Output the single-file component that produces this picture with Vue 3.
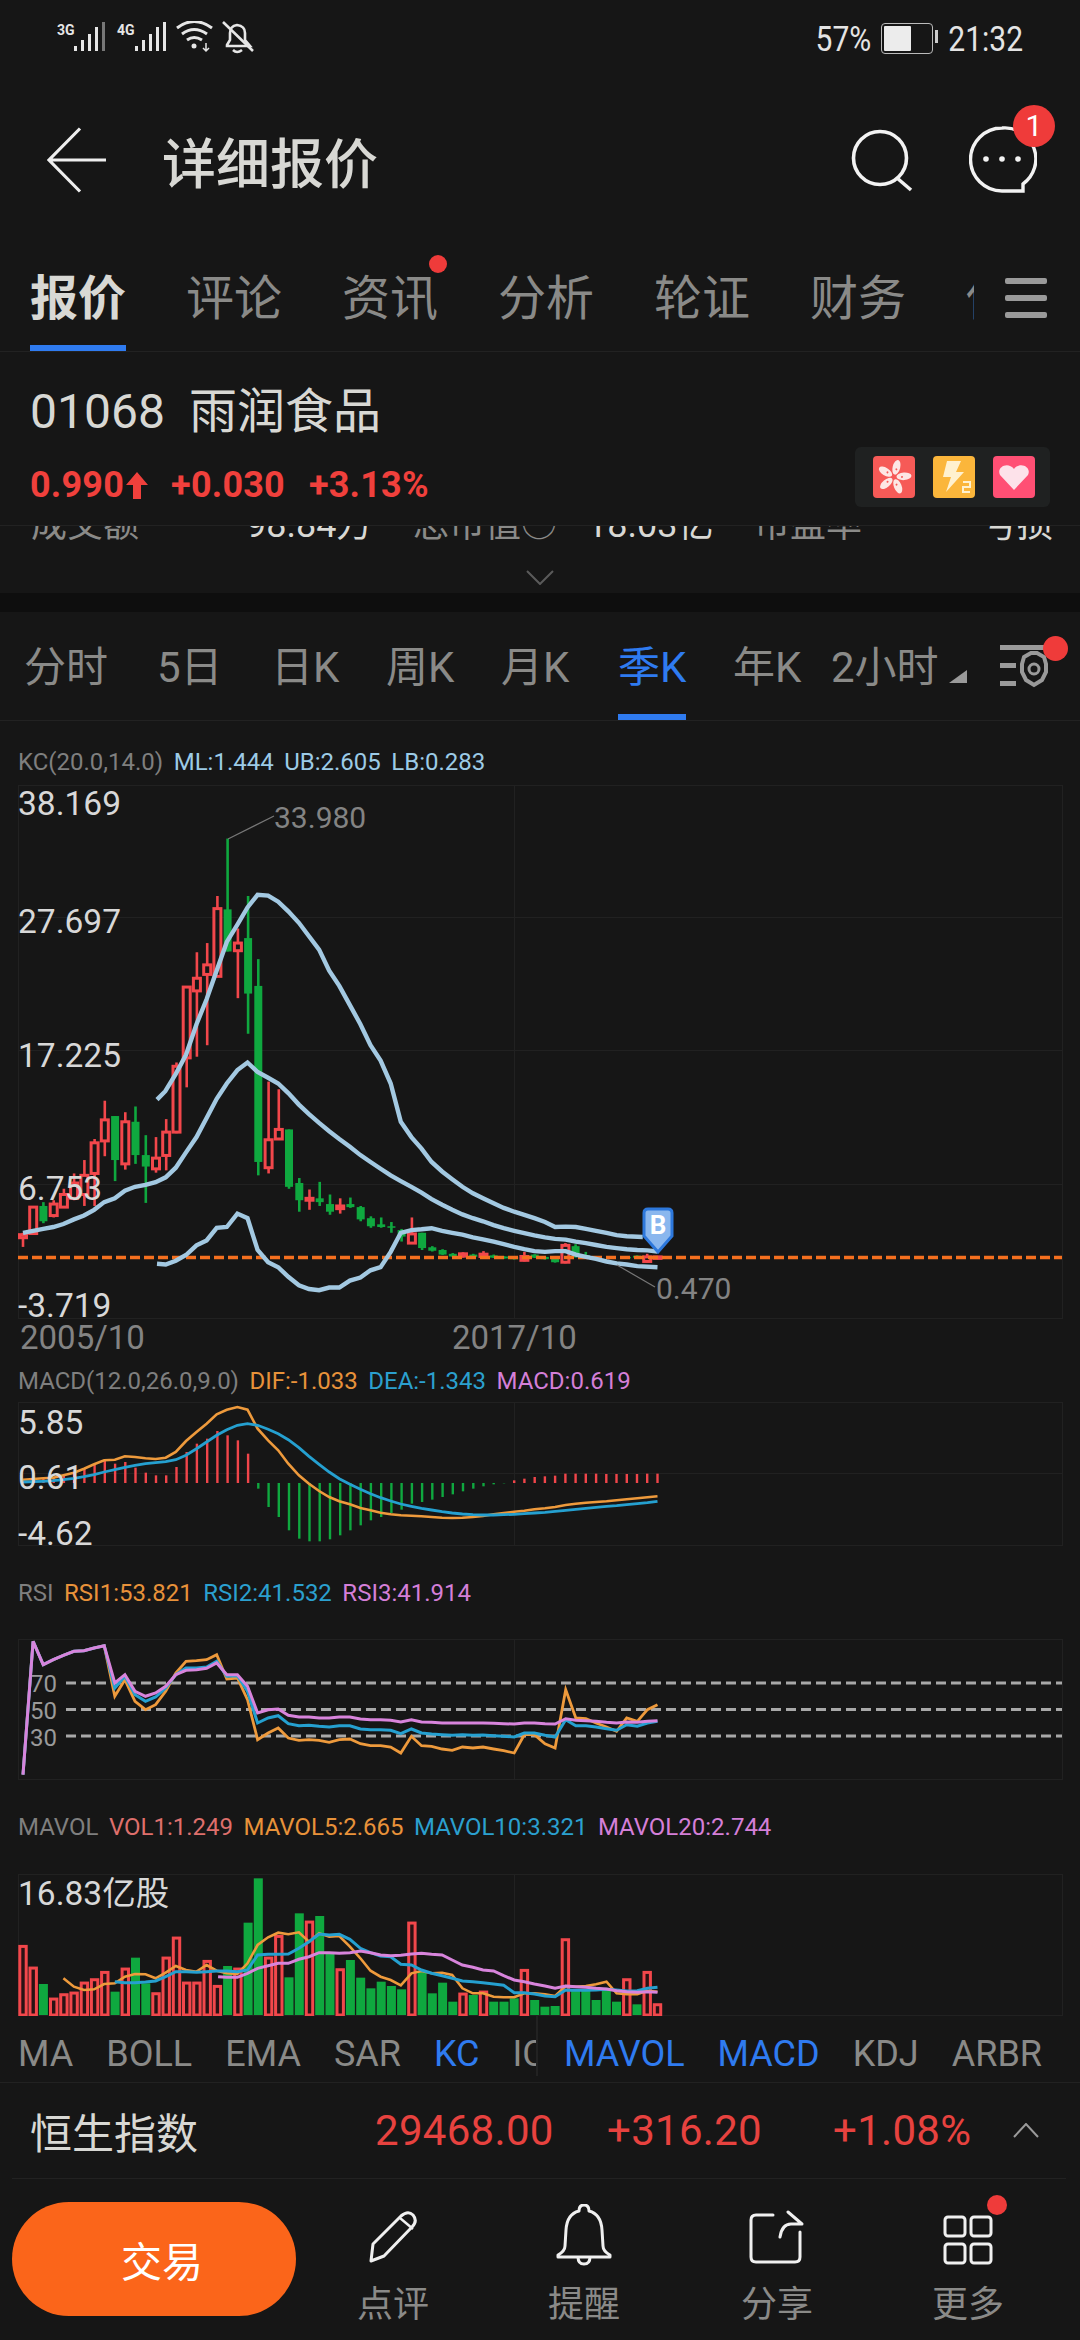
<script setup>
// reference was read in zoom coords, x scale is 2.178 everywhere in the chart
const zx = (v) => +(v / 2.178).toFixed(1)
const stepX = (i) => 50 + 22.29 * i

const pts = (list, fy) => list.map(([x, y]) => `${zx(x)},${fy(y).toFixed(1)}`).join(' ')

// KC panel: zoom y -> svg y
const ky = (y) => (y - 65) / 2.613
const my = (y) => (y - 185) / 3
const ry = (y) => (y - 898) / 3
const vy = (y) => (y - 222) / 3

const tabs = ['报价', '评论', '资讯', '分析', '轮证', '财务', '估值']
const periods = [
  { t: '分时', w: 133 }, { t: '5日', w: 114 }, { t: '日K', w: 115 }, { t: '周K', w: 115 },
  { t: '月K', w: 117 }, { t: '季K', w: 115, on: true }, { t: '年K', w: 98 }, { t: '2小时', w: 112 },
]

// [color, wickTop, bodyTop, bodyBottom, wickBottom]
const candleData = [
  ['r', 1235, 1240, 1248, 1272], ['r', 1165, 1168, 1237, 1240], ['g', 1155, 1165, 1205, 1210], ['r', 1150, 1160, 1190, 1195],
  ['r', 1120, 1135, 1168, 1170], ['r', 1080, 1105, 1145, 1150], ['r', 1045, 1085, 1135, 1165], ['r', 990, 1000, 1080, 1165],
  ['r', 890, 940, 995, 1035], ['g', 930, 930, 1045, 1100], ['r', 920, 945, 1055, 1070], ['g', 905, 945, 1032, 1055],
  ['g', 980, 1032, 1062, 1157], ['r', 985, 1040, 1068, 1078], ['r', 938, 972, 1033, 1072], ['r', 790, 800, 972, 975],
  ['r', 593, 593, 778, 855], ['r', 502, 570, 603, 775], ['r', 478, 535, 560, 745], ['r', 355, 388, 565, 565],
  ['g', 205, 390, 500, 500], ['r', 440, 478, 498, 622], ['g', 355, 465, 610, 715], ['g', 520, 590, 1050, 1085],
  ['r', 840, 992, 1065, 1080], ['r', 860, 965, 990, 990], ['g', 965, 965, 1115, 1120], ['g', 1092, 1105, 1150, 1180],
  ['r', 1122, 1145, 1150, 1175], ['g', 1102, 1145, 1155, 1165], ['g', 1135, 1160, 1180, 1188], ['r', 1145, 1165, 1172, 1185],
  ['g', 1143, 1160, 1168, 1170], ['g', 1165, 1168, 1200, 1205], ['g', 1192, 1197, 1218, 1222], ['g', 1195, 1213, 1220, 1222],
  ['g', 1207, 1218, 1222, 1235], ['g', 1225, 1228, 1245, 1258], ['r', 1195, 1238, 1262, 1262], ['g', 1235, 1235, 1275, 1280],
  ['g', 1270, 1273, 1282, 1284], ['g', 1278, 1280, 1292, 1293], ['g', 1288, 1290, 1297, 1298], ['r', 1286, 1290, 1296, 1300],
  ['g', 1290, 1292, 1298, 1300], ['r', 1283, 1291, 1297, 1302], ['g', 1292, 1294, 1300, 1301], ['g', 1296, 1297, 1302, 1303],
  ['g', 1297, 1298, 1304, 1305], ['r', 1285, 1297, 1307, 1310], ['g', 1291, 1292, 1300, 1301], ['g', 1297, 1298, 1304, 1305],
  ['g', 1301, 1302, 1312, 1313], ['r', 1262, 1268, 1312, 1315], ['g', 1265, 1270, 1298, 1300], ['g', 1285, 1293, 1300, 1301],
  ['g', 1301, 1302, 1306, 1307], ['g', 1307, 1308, 1312, 1313], ['g', 1311, 1312, 1315, 1316], ['g', 1297, 1298, 1302, 1303],
  ['g', 1294, 1295, 1300, 1301], ['r', 1290, 1298, 1310, 1312], ['r', 1296, 1298, 1302, 1304],
]
const candles = candleData.map(([c, wt, bt, bb, wb], i) => ({
  c,
  x: zx(stepX(i)),
  wt: ky(wt), wb: ky(wb), bt: ky(bt), bh: Math.max(ky(bb) - ky(bt), 1.5),
}))

const ub = [[342,887],[360,865],[383,820],[405,770],[428,690],[450,625],[472,550],[494,475],[517,430],[539,385],[561,352],[584,354],[606,370],[628,395],[651,425],[673,460],[695,495],[717,550],[739,590],[762,640],[785,690],[807,745],[829,785],[851,845],[873,945],[896,985],[918,1015],[940,1050],[963,1075],[985,1095],[1007,1115],[1030,1132],[1052,1145],[1075,1158],[1097,1170],[1120,1180],[1142,1188],[1164,1197],[1187,1207],[1209,1220],[1232,1219],[1254,1220],[1276,1225],[1298,1230],[1321,1235],[1343,1241],[1365,1244],[1400,1246]]
const ml = [[50,1235],[72,1230],[94,1225],[116,1220],[138,1212],[161,1200],[183,1190],[205,1175],[227,1155],[250,1145],[272,1125],[294,1115],[317,1110],[339,1103],[361,1090],[383,1065],[405,1025],[428,985],[450,935],[472,885],[494,845],[517,810],[539,790],[561,815],[584,830],[606,845],[628,870],[651,900],[673,925],[695,948],[717,970],[739,990],[762,1010],[785,1032],[807,1050],[829,1068],[851,1085],[873,1100],[896,1115],[918,1130],[940,1147],[963,1162],[985,1175],[1007,1187],[1030,1197],[1052,1205],[1075,1215],[1097,1223],[1120,1230],[1142,1236],[1164,1242],[1187,1247],[1209,1251],[1232,1253],[1254,1258],[1276,1262],[1298,1267],[1321,1272],[1343,1275],[1365,1278],[1388,1280],[1410,1281],[1432,1284]]
const lb = [[342,1316],[361,1318],[383,1308],[405,1293],[428,1268],[450,1255],[472,1222],[494,1220],[517,1185],[539,1197],[561,1280],[584,1312],[606,1325],[628,1350],[651,1372],[673,1382],[695,1385],[717,1378],[739,1378],[762,1360],[785,1352],[807,1333],[829,1325],[851,1285],[873,1235],[896,1228],[918,1226],[940,1223],[963,1230],[985,1235],[1007,1240],[1030,1247],[1052,1252],[1075,1258],[1097,1265],[1120,1272],[1142,1278],[1164,1283],[1187,1285],[1209,1283],[1232,1283],[1254,1292],[1276,1298],[1298,1303],[1321,1310],[1343,1315],[1365,1318],[1388,1322],[1432,1325]]
const kcLines = [ub, ml, lb].map((l) => pts(l, ky))

// MACD histogram: end of each bar in zoom y, zero line is 428
const macdEnds = [425,420,415,410,405,395,385,372,360,370,365,382,397,405,405,380,335,310,295,272,285,300,340,445,500,530,570,595,603,603,597,585,570,555,540,530,518,508,490,485,478,470,462,453,445,438,432,429,420,415,410,408,406,400,400,400,400,401,401,401,401,400,400]
const macdBars = macdEnds.map((e, i) => ({
  x: zx(stepX(i)),
  y1: my(428),
  y2: my(e),
  c: e < 428 ? '#f0454a' : '#0fa83f',
}))
const dif = [[50,418],[72,416],[94,414],[116,412],[138,405],[161,397],[183,385],[205,372],[227,360],[250,358],[272,348],[294,350],[317,354],[339,356],[361,352],[383,335],[405,302],[428,275],[450,250],[472,222],[494,208],[517,200],[539,208],[561,265],[584,300],[606,330],[628,370],[651,405],[673,430],[695,452],[717,470],[739,483],[762,492],[785,503],[807,510],[829,517],[851,522],[873,525],[896,526],[918,528],[940,530],[963,532],[985,533],[1007,532],[1030,530],[1052,527],[1075,522],[1097,518],[1120,514],[1142,511],[1164,507],[1187,504],[1209,500],[1232,494],[1254,490],[1276,487],[1298,485],[1321,483],[1343,480],[1365,477],[1388,474],[1410,471],[1432,468]]
const dea = [[50,425],[72,424],[94,423],[116,421],[138,418],[161,414],[183,409],[205,403],[227,395],[250,388],[272,381],[294,375],[317,370],[339,367],[361,364],[383,358],[405,345],[428,325],[450,305],[472,285],[494,268],[517,255],[539,250],[561,255],[584,267],[606,280],[628,298],[651,322],[673,348],[695,372],[717,395],[739,415],[762,432],[785,447],[807,460],[829,472],[851,482],[873,491],[896,498],[918,504],[940,509],[963,514],[985,518],[1007,521],[1030,523],[1052,524],[1075,524],[1097,523],[1120,522],[1142,520],[1164,518],[1187,516],[1209,513],[1232,510],[1254,507],[1276,504],[1298,501],[1321,498],[1343,496],[1365,493],[1388,490],[1410,487],[1432,483]]

const rsiHead = [[50,1305],[72,905],[94,975],[116,960],[138,947],[161,935],[183,933],[205,925],[227,918]]
const rsi1 = rsiHead.concat([[250,1070],[272,1020],[294,1085],[317,1110],[339,1095],[361,1055],[383,1000],[405,965],[428,963],[450,960],[472,945],[494,1018],[517,1015],[539,1080],[561,1200],[584,1180],[606,1165],[628,1195],[651,1202],[673,1200],[695,1202],[717,1208],[739,1200],[762,1198],[785,1212],[807,1218],[829,1218],[851,1222],[873,1240],[896,1190],[918,1218],[940,1220],[963,1228],[985,1232],[1007,1222],[1030,1225],[1052,1222],[1075,1228],[1097,1233],[1120,1240],[1142,1185],[1164,1185],[1187,1212],[1209,1225],[1232,1050],[1254,1135],[1276,1137],[1298,1150],[1321,1162],[1343,1175],[1365,1135],[1388,1145],[1410,1110],[1432,1095]])
const rsi2 = rsiHead.concat([[250,1045],[272,1010],[294,1065],[317,1085],[339,1072],[361,1045],[383,1005],[405,985],[428,985],[450,982],[472,965],[494,1010],[517,1008],[539,1055],[561,1150],[584,1135],[606,1128],[628,1152],[651,1158],[673,1157],[695,1160],[717,1162],[739,1158],[762,1158],[785,1168],[807,1170],[829,1170],[851,1172],[873,1182],[896,1168],[918,1180],[940,1183],[963,1185],[985,1187],[1007,1185],[1030,1187],[1052,1186],[1075,1188],[1097,1190],[1120,1192],[1142,1180],[1164,1180],[1187,1187],[1209,1192],[1232,1140],[1254,1158],[1276,1158],[1298,1162],[1321,1167],[1343,1172],[1365,1155],[1388,1160],[1410,1150],[1432,1145]])
const rsi3 = rsiHead.concat([[250,1030],[272,1005],[294,1055],[317,1070],[339,1060],[361,1040],[383,1005],[405,992],[428,990],[450,986],[472,970],[494,1005],[517,1005],[539,1040],[561,1120],[584,1110],[606,1108],[628,1127],[651,1132],[673,1132],[695,1135],[717,1135],[739,1132],[762,1132],[785,1138],[807,1140],[829,1140],[851,1142],[873,1147],[896,1140],[918,1147],[940,1148],[963,1150],[985,1150],[1007,1150],[1030,1150],[1052,1150],[1075,1151],[1097,1152],[1120,1153],[1142,1150],[1164,1150],[1187,1152],[1209,1153],[1232,1137],[1254,1142],[1276,1143],[1298,1145],[1321,1148],[1343,1150],[1365,1147],[1388,1148],[1410,1145],[1432,1143]])

const volData = [
  ['r',435],['r',500],['g',552],['r',593],['r',580],['r',575],['r',545],['r',535],['r',513],['g',575],['r',503],['g',473],['g',550],['r',577],['r',470],['r',410],
  ['r',545],['r',545],['r',480],['r',555],['g',498],['r',503],['g',368],['g',235],['r',470],['r',405],['g',532],['g',340],['r',362],['g',348],['g',460],['r',505],
  ['g',480],['g',533],['g',565],['g',545],['g',558],['g',568],['r',365],['g',515],['g',580],['g',548],['g',605],['r',578],['g',585],['r',572],['g',605],['g',605],
  ['g',595],['r',507],['g',600],['g',620],['g',618],['r',415],['g',570],['g',570],['g',600],['g',565],['g',605],['r',535],['g',613],['r',513],['r',610],
]
const volBars = volData.map(([c, top], i) => ({
  c,
  x: zx(stepX(i)),
  y: vy(top),
  h: vy(645) - vy(top),
}))
const mavol5 = [[138,535],[161,560],[183,570],[205,568],[227,552],[250,550],[272,530],[294,522],[317,523],[339,535],[361,518],[383,498],[405,510],[428,515],[450,495],[472,512],[494,520],[517,522],[539,490],[561,435],[584,412],[606,398],[628,403],[651,397],[673,425],[695,400],[717,410],[739,408],[762,440],[785,475],[807,512],[829,530],[851,540],[873,556],[896,520],[918,513],[940,520],[963,518],[985,525],[1007,565],[1030,580],[1052,580],[1075,590],[1097,592],[1120,592],[1142,580],[1164,580],[1187,583],[1209,588],[1232,558],[1254,560],[1276,558],[1298,553],[1321,545],[1343,580],[1365,583],[1388,583],[1410,572],[1432,575]]
const mavol10 = [[250,545],[272,548],[294,548],[317,546],[339,543],[361,530],[383,515],[405,515],[428,517],[450,515],[472,513],[494,513],[517,515],[539,510],[561,465],[584,463],[606,463],[628,462],[651,445],[673,425],[695,402],[717,405],[739,403],[762,418],[785,445],[807,458],[829,468],[851,470],[873,493],[896,495],[918,510],[940,520],[963,527],[985,535],[1007,543],[1030,545],[1052,548],[1075,552],[1097,556],[1120,578],[1142,578],[1164,582],[1187,588],[1209,590],[1232,570],[1254,571],[1276,571],[1298,570],[1321,568],[1343,570],[1365,573],[1388,572],[1410,565],[1432,562]]
const mavol20 = [[475,530],[494,532],[517,532],[539,520],[561,505],[584,497],[606,490],[628,490],[651,478],[673,470],[695,458],[717,458],[739,460],[762,458],[785,453],[807,458],[829,465],[851,467],[873,466],[896,462],[918,460],[940,463],[963,465],[985,480],[1007,495],[1030,502],[1052,510],[1075,513],[1097,527],[1120,540],[1142,545],[1164,552],[1187,558],[1209,565],[1232,558],[1254,560],[1276,562],[1298,565],[1321,567],[1343,572],[1365,575],[1388,577],[1410,575],[1432,577]]
</script>

<template>
  <div class="page">
    <div class="status">
      <svg class="status-left" width="210" height="34" viewBox="0 0 210 34">
        <text x="0" y="14" class="net">3G</text>
        <g fill="#e6e6e6">
          <rect x="17" y="25" width="3" height="5" />
          <rect x="24" y="19" width="3" height="11" />
          <rect x="31" y="13" width="3" height="17" />
          <rect x="38" y="6" width="3" height="24" />
          <rect x="45" y="1" width="3" height="29" fill="#777" />
        </g>
        <text x="60" y="14" class="net">4G</text>
        <g fill="#e6e6e6">
          <rect x="78" y="25" width="3" height="5" />
          <rect x="85" y="19" width="3" height="11" />
          <rect x="92" y="13" width="3" height="17" />
          <rect x="99" y="6" width="3" height="24" />
          <rect x="106" y="1" width="3" height="29" />
        </g>
        <g fill="none" stroke="#e6e6e6" stroke-width="3">
          <path d="M120 7 Q137 -6 155 7" />
          <path d="M125 13 Q137 4 150 13" />
          <path d="M130 19 Q137 14 145 19" />
        </g>
        <circle cx="137" cy="25" r="2.5" fill="#e6e6e6" />
        <path d="M149 22v8M146 27l3 3 3-3" stroke="#e6e6e6" stroke-width="1.5" fill="none" />
        <g fill="none" stroke="#e6e6e6" stroke-width="2.6">
          <path d="M170 24 L173 19 V12 Q173 5 180 4 Q188 5 188 12 V19 L193 25 H170 Z" />
          <path d="M166 1 L196 30" />
          <path d="M176 29 Q180 33 185 29" />
        </g>
      </svg>
      <div class="status-right">
        <span class="st-text">57%</span>
        <span class="battery"><i class="battery-fill"></i></span>
        <span class="st-text">21:32</span>
      </div>
    </div>

    <div class="header">
      <svg class="back" width="60" height="66" viewBox="0 0 60 66">
        <path d="M33 1.5 L2 33 L33 64.5 M2 33 H59" fill="none" stroke="#eee" stroke-width="3.2" />
      </svg>
      <span class="title">详细报价</span>
      <svg class="search" width="62" height="64" viewBox="0 0 62 64">
        <circle cx="29" cy="30" r="26.5" fill="none" stroke="#f2f2f2" stroke-width="3.6" />
        <path d="M46 50 L60 62" stroke="#f2f2f2" stroke-width="3.6" />
      </svg>
      <div class="chat">
        <svg width="68" height="68" viewBox="0 0 68 68">
          <path d="M33 2 A31 31 0 1 0 33 65 H54 V58 A31 31 0 0 0 33 2 Z" fill="none" stroke="#f2f2f2" stroke-width="3.4" />
          <circle cx="17" cy="33" r="2.8" fill="#f2f2f2" />
          <circle cx="33" cy="33" r="2.8" fill="#f2f2f2" />
          <circle cx="49" cy="33" r="2.8" fill="#f2f2f2" />
        </svg>
        <span class="chat-badge">1</span>
      </div>
    </div>

    <div class="tabs">
      <div class="tab-scroll">
        <span v-for="(t, i) in tabs" :key="t" class="tab" :class="{ on: i === 0 }">
          {{ t }}
          <i v-if="t === '资讯'" class="tab-dot"></i>
        </span>
      </div>
      <div class="burger"><i></i><i></i><i></i></div>
    </div>

    <div class="quote">
      <div class="quote-main">
        <div class="stock-name"><span>01068</span><span class="stock-cn">雨润食品</span></div>
        <div class="stock-price">
          <span class="p1">0.990</span>
          <svg class="up" width="24" height="27" viewBox="0 0 24 27"><path d="M12 0 L23 13 H16 V27 H8 V13 H1 Z" fill="#f0403c" /></svg>
          <span class="p2">+0.030</span>
          <span class="p3">+3.13%</span>
        </div>
      </div>
      <div class="flags">
        <svg class="flag" width="42" height="42" viewBox="0 0 42 42">
          <rect width="42" height="42" rx="4" fill="#f65a57" />
          <g v-for="a in [0, 72, 144, 216, 288]" :key="a" :transform="`rotate(${a + 14} 21 21)`">
            <ellipse cx="21" cy="11" rx="3.8" ry="7.5" fill="#fde7e4" />
            <circle cx="21.5" cy="13" r="1" fill="#f65a57" />
          </g>
        </svg>
        <svg class="flag" width="42" height="42" viewBox="0 0 42 42">
          <rect width="42" height="42" rx="4" fill="#fbb63b" />
          <path d="M14 5 H28 L23 16 H31 L13 36 L18 21 H10 Z" fill="#fff1cf" />
          <path d="M30 26 H37 V31 H30 V36 H37" fill="none" stroke="#fff1cf" stroke-width="2" />
        </svg>
        <svg class="flag" width="42" height="42" viewBox="0 0 42 42">
          <rect width="42" height="42" rx="4" fill="#ff4f74" />
          <path d="M21 34 L7 19 C3 11 15 5 21 13 C27 5 39 11 35 19 Z" fill="#fde2ea" />
        </svg>
      </div>
    </div>

    <div class="peek">
      <div class="peek-row">
        <span class="peek-label w1">成交额</span>
        <span class="peek-val w2">98.84万</span>
        <span class="peek-label w3">总市值○</span>
        <span class="peek-val w4">18.03亿</span>
        <span class="peek-label w5">市盈率···</span>
        <span class="peek-val">亏损</span>
      </div>
      <svg class="peek-arrow" width="28" height="15" viewBox="0 0 28 15">
        <path d="M1 1 L14 14 L27 1" fill="none" stroke="#5a5a5a" stroke-width="2" />
      </svg>
    </div>
    <div class="band"></div>

    <div class="periods">
      <span v-for="p in periods" :key="p.t" class="period" :class="{ on: p.on }" :style="{ width: p.w + 'px' }">
        <span class="period-text">{{ p.t }}</span>
      </span>
      <i class="tri"></i>
      <div class="setting">
        <svg width="52" height="48" viewBox="0 0 52 48">
          <g fill="#9a9a9a">
            <rect x="0" y="3" width="44" height="5" />
            <rect x="0" y="21" width="16" height="5" />
            <rect x="0" y="39" width="16" height="5" />
          </g>
          <path d="M24 15 L31 11 H37 L44 15 L46 22 V30 L42 38 L34 43 L26 38 L22 30 V22 Z" fill="none" stroke="#9a9a9a" stroke-width="4" />
          <circle cx="34" cy="27" r="5" fill="none" stroke="#9a9a9a" stroke-width="3" />
        </svg>
        <i class="setting-dot"></i>
      </div>
    </div>

    <div class="ind-row kc-row">
      <span class="gray">KC(20.0,14.0)</span>
      <span class="kc">ML:1.444</span>
      <span class="kc">UB:2.605</span>
      <span class="kc">LB:0.283</span>
    </div>

    <svg class="chart" width="1080" height="534" viewBox="0 0 1080 534">
      <g stroke="#212121" fill="none">
        <rect x="18.5" y="0.5" width="1044" height="533" />
        <path d="M18 132.5H1062M18 265.5H1062M18 399.5H1062M514.5 0V534" />
      </g>
      <g v-for="(k, i) in candles" :key="i">
        <line :x1="k.x" :x2="k.x" :y1="k.wt" :y2="k.wb" :stroke="k.c === 'r' ? '#f2474b' : '#0fa83f'" stroke-width="2.6" />
        <rect v-if="k.c === 'r'" :x="k.x - 3.5" :y="k.bt" width="7" :height="k.bh" fill="#161616" stroke="#f2474b" stroke-width="3" />
        <rect v-else :x="k.x - 4" :y="k.bt" width="8" :height="k.bh" fill="#0fa83f" />
      </g>
      <line x1="18" x2="1062" y1="472.5" y2="472.5" stroke="#f5701f" stroke-width="3.4" stroke-dasharray="10 4" />
      <polyline v-for="(l, i) in kcLines" :key="i" :points="l" fill="none" stroke="#a3c9e2" stroke-width="4.4" />
      <path d="M228 54 L274 31" stroke="#777" stroke-width="1.2" />
      <path d="M617 480 L655 502" stroke="#777" stroke-width="1.2" />
      <path d="M648 424 H668 Q672 424 672 428 V451 L658 467 L644 451 V428 Q644 424 648 424 Z" fill="#8ab7ee" stroke="#2d78dc" stroke-width="3" />
      <text x="658" y="449" class="b-mark">B</text>
      <text x="18" y="30" class="axis">38.169</text>
      <text x="18" y="148" class="axis">27.697</text>
      <text x="18" y="282" class="axis">17.225</text>
      <text x="18" y="415" class="axis">6.753</text>
      <text x="18" y="532" class="axis">-3.719</text>
      <text x="274" y="43" class="axis dim">33.980</text>
      <text x="656" y="514" class="axis dim">0.470</text>
    </svg>

    <div class="dates"><span>2005/10</span><span>2017/10</span></div>

    <div class="ind-row macd-row">
      <span class="gray">MACD(12.0,26.0,9.0)</span>
      <span class="orange">DIF:-1.033</span>
      <span class="blue">DEA:-1.343</span>
      <span class="pink">MACD:0.619</span>
    </div>

    <svg class="chart" width="1080" height="144" viewBox="0 0 1080 144">
      <g stroke="#212121" fill="none">
        <rect x="18.5" y="0.5" width="1044" height="143" />
        <path d="M18 71.5H1062M514.5 0V144" />
      </g>
      <line v-for="(b, i) in macdBars" :key="i" :x1="b.x" :x2="b.x" :y1="b.y1" :y2="b.y2" :stroke="b.c" stroke-width="2.4" />
      <polyline :points="pts(dif, my)" fill="none" stroke="#ee9a3c" stroke-width="2.6" />
      <polyline :points="pts(dea, my)" fill="none" stroke="#25a0d0" stroke-width="2.8" />
      <text x="18" y="32" class="axis">5.85</text>
      <text x="18" y="87" class="axis">0.61</text>
      <text x="18" y="143" class="axis">-4.62</text>
    </svg>

    <div class="ind-row rsi-row">
      <span class="gray">RSI</span>
      <span class="orange">RSI1:53.821</span>
      <span class="blue">RSI2:41.532</span>
      <span class="pink">RSI3:41.914</span>
    </div>

    <svg class="chart" width="1080" height="141" viewBox="0 0 1080 141">
      <g stroke="#212121" fill="none">
        <rect x="18.5" y="0.5" width="1044" height="140" />
        <path d="M514.5 0V141" />
      </g>
      <g stroke="#a8a8a8" stroke-width="3" stroke-dasharray="10 5">
        <line x1="66" x2="1062" y1="44" y2="44" />
        <line x1="66" x2="1062" y1="70.5" y2="70.5" />
        <line x1="66" x2="1062" y1="97" y2="97" />
      </g>
      <text x="30" y="53" class="rsi-axis">70</text>
      <text x="30" y="80" class="rsi-axis">50</text>
      <text x="30" y="107" class="rsi-axis">30</text>
      <polyline :points="pts(rsi1, ry)" fill="none" stroke="#ee9a3c" stroke-width="2.8" />
      <polyline :points="pts(rsi2, ry)" fill="none" stroke="#25a0d0" stroke-width="3" />
      <polyline :points="pts(rsi3, ry)" fill="none" stroke="#d884dc" stroke-width="3" />
    </svg>

    <div class="ind-row vol-row">
      <span class="gray">MAVOL</span>
      <span class="salmon">VOL1:1.249</span>
      <span class="orange">MAVOL5:2.665</span>
      <span class="blue">MAVOL10:3.321</span>
      <span class="pink">MAVOL20:2.744</span>
    </div>

    <svg class="chart" width="1080" height="142" viewBox="0 0 1080 142">
      <g stroke="#212121" fill="none">
        <rect x="18.5" y="0.5" width="1044" height="141" />
        <path d="M514.5 0V141" />
      </g>
      <g v-for="(b, i) in volBars" :key="i">
        <rect v-if="b.c === 'r'" :x="b.x - 3.2" :y="b.y + 1.4" width="6.4" :height="b.h - 1.4" fill="#2a1214" stroke="#f2474b" stroke-width="3" />
        <rect v-else :x="b.x - 4.5" :y="b.y" width="9" :height="b.h" fill="#0fa83f" />
      </g>
      <polyline :points="pts(mavol5, vy)" fill="none" stroke="#ee9a3c" stroke-width="2.6" />
      <polyline :points="pts(mavol10, vy)" fill="none" stroke="#25a0d0" stroke-width="3" />
      <polyline :points="pts(mavol20, vy)" fill="none" stroke="#d884dc" stroke-width="3" />
      <text x="18" y="31" class="axis">16.83亿股</text>
    </svg>

    <div class="indicators">
      <div class="ind-left">
        <span>MA</span><span>BOLL</span><span>EMA</span><span>SAR</span><span class="sel">KC</span><span>IC</span>
      </div>
      <div class="ind-right">
        <span class="sel">MAVOL</span><span class="sel">MACD</span><span>KDJ</span><span>ARBR</span>
      </div>
    </div>

    <div class="index-row">
      <span class="index-name">恒生指数</span>
      <span class="index-v v1">29468.00</span>
      <span class="index-v v2">+316.20</span>
      <span class="index-v v3">+1.08%</span>
      <svg class="index-arrow" width="26" height="15" viewBox="0 0 26 15">
        <path d="M1 14 L13 1 L25 14" fill="none" stroke="#9a9a9a" stroke-width="2" />
      </svg>
    </div>

    <div class="bottom">
      <div class="trade-btn"><span>交易</span></div>
      <div class="act">
        <svg width="52" height="56" viewBox="0 0 52 56">
          <path d="M4 51 L6 34 L34 6 Q41 0 46 5 Q51 11 45 17 L17 46 Z" fill="none" stroke="#f0f0f0" stroke-width="3" stroke-linejoin="round" />
          <path d="M33 8 L46 19" stroke="#f0f0f0" stroke-width="2.4" />
        </svg>
        <span>点评</span>
      </div>
      <div class="act act-2">
        <svg width="56" height="62" viewBox="0 0 56 62">
          <path d="M28 1 Q33 1 33 7 Q45 10 46 26 L47 42 Q47 47 54 51 V53 H2 V51 Q9 47 9 42 L10 26 Q11 10 23 7 Q23 1 28 1 Z" fill="none" stroke="#f0f0f0" stroke-width="3" stroke-linejoin="round" />
          <path d="M22 53 Q22 60 28 60 Q34 60 34 53" fill="none" stroke="#f0f0f0" stroke-width="3" />
        </svg>
        <span>提醒</span>
      </div>
      <div class="act act-3">
        <svg width="56" height="56" viewBox="0 0 56 56">
          <path d="M24 5 H7 Q2 5 2 10 V47 Q2 52 7 52 H46 Q51 52 51 47 V22" fill="none" stroke="#f0f0f0" stroke-width="3" stroke-linecap="round" />
          <path d="M31 27 Q33 14 42 14 H53 L39 2" fill="none" stroke="#f0f0f0" stroke-width="3" stroke-linecap="round" stroke-linejoin="round" />
        </svg>
        <span>分享</span>
      </div>
      <div class="act act-4">
        <div class="more-wrap">
          <svg width="50" height="52" viewBox="0 0 50 52">
            <g fill="none" stroke="#f0f0f0" stroke-width="3">
              <rect x="2" y="3" width="20" height="19" rx="3" />
              <rect x="28" y="3" width="20" height="19" rx="3" />
              <rect x="2" y="30" width="20" height="19" rx="3" />
              <rect x="28" y="30" width="20" height="19" rx="3" />
            </g>
          </svg>
          <i class="more-dot"></i>
        </div>
        <span>更多</span>
      </div>
    </div>
  </div>
</template>

<style>
html, body {
  margin: 0;
  background: #161616;
}
</style>

<style scoped>
.page {
  width: 1080px;
  height: 2340px;
  overflow: hidden;
  background: #161616;
  color: #d8d8d4;
  font-family: Roboto, "Noto Sans CJK SC", sans-serif;
  display: flex;
  flex-direction: column;
}
i { display: block; font-style: normal; }

.status {
  height: 100px;
  flex: none;
  display: flex;
  justify-content: space-between;
  align-items: flex-start;
  padding: 21px 57px 0 57px;
  box-sizing: border-box;
}
.net {
  font-size: 14px;
  font-weight: 700;
  fill: #e6e6e6;
}
.status-right {
  display: flex;
  align-items: center;
  gap: 10px;
  height: 34px;
}
.st-text {
  font-size: 30px;
  color: #e4e4e4;
  transform: scaleY(1.18);
}
.battery {
  width: 46px;
  height: 25px;
  border: 1.5px solid #bbb;
  border-radius: 4px;
  position: relative;
  padding: 2px;
  margin-right: 5px;
}
.battery::after {
  content: "";
  position: absolute;
  right: -6px;
  top: 6px;
  width: 3px;
  height: 13px;
  background: #ccc;
}
.battery-fill {
  width: 27px;
  height: 100%;
  background: #ececec;
  border-radius: 1px;
}

.header {
  height: 120px;
  flex: none;
  display: flex;
  align-items: center;
  padding-left: 47px;
}
.title {
  font-size: 54px;
  font-weight: 500;
  margin-left: 55px;
  color: #d8d8d4;
}
.search { margin-left: auto; margin-right: 56px; }
.chat { position: relative; margin-right: 43px; height: 68px; }
.chat svg { display: block; }
.chat-badge {
  position: absolute;
  left: 44px;
  top: -21px;
  width: 42px;
  height: 42px;
  border-radius: 50%;
  background: #ef3b3a;
  color: #fff;
  font-size: 30px;
  line-height: 42px;
  text-align: center;
}

.tabs {
  height: 132px;
  flex: none;
  display: flex;
  border-bottom: 1px solid #222;
  box-sizing: border-box;
}
.tab-scroll {
  width: 974px;
  overflow: hidden;
  display: flex;
  gap: 60px;
  padding-left: 30px;
  box-sizing: border-box;
  white-space: nowrap;
  flex: none;
}
.tab {
  flex: none;
  width: 96px;
  font-size: 48px;
  line-height: 48px;
  padding-top: 55px;
  height: 131px;
  box-sizing: border-box;
  color: #8a8a88;
  position: relative;
}
.tab.on {
  color: #d8d8d4;
  font-weight: 700;
  border-bottom: 6px solid #2f7bf0;
}
.tab-dot {
  position: absolute;
  left: 87px;
  top: 35px;
  width: 18px;
  height: 18px;
  border-radius: 50%;
  background: #ef3b3a;
}
.burger {
  margin-left: 31px;
  padding-top: 58px;
  display: flex;
  flex-direction: column;
  gap: 11px;
}
.burger i {
  width: 42px;
  height: 6px;
  border-radius: 2px;
  background: #9a9a9a;
}

.quote {
  height: 174px;
  flex: none;
  display: flex;
  justify-content: space-between;
  align-items: flex-start;
  padding: 0 30px 0 30px;
  box-sizing: border-box;
  border-bottom: 1px solid #222;
}
.stock-name {
  font-size: 48px;
  line-height: 56px;
  margin-top: 32px;
  white-space: nowrap;
  color: #d8d8d4;
}
.stock-cn { margin-left: 24px; }
.stock-price {
  display: flex;
  align-items: center;
  margin-top: 25px;
  height: 40px;
  font-size: 36px;
  font-weight: 700;
  letter-spacing: 0.2px;
  color: #f0403c;
}
.up { margin-left: 1px; }
.p2 { margin-left: 22px; }
.p3 { margin-left: 24px; }
.flags {
  margin-top: 95px;
  width: 195px;
  height: 60px;
  background: #1f2121;
  border-radius: 6px;
  padding: 9px 18px;
  box-sizing: border-box;
  display: flex;
  gap: 18px;
}
.flag { flex: none; display: block; }

.peek {
  height: 67px;
  flex: none;
  overflow: hidden;
  position: relative;
}
.peek-row {
  display: flex;
  font-size: 36px;
  line-height: 40px;
  margin-top: -21px;
  padding-left: 31px;
  white-space: nowrap;
}
.peek-label { color: #8a8a88; }
.peek-val { color: #d8d8d4; }
.w1 { width: 215px; }
.w2 { width: 167px; }
.w3 { width: 174px; }
.w4 { width: 167px; }
.w5 { width: 227px; }
.peek-arrow {
  display: block;
  margin: 25px auto 0;
}
.band {
  height: 19px;
  flex: none;
  background: #0e0e0e;
}

.periods {
  height: 109px;
  flex: none;
  display: flex;
  padding-left: 24px;
  box-sizing: border-box;
  border-bottom: 1px solid #222;
}
.period {
  flex: none;
  height: 108px;
  font-size: 42px;
  line-height: 50px;
  padding-top: 31px;
  box-sizing: border-box;
  color: #8a8a88;
  white-space: nowrap;
}
.period-text { display: inline-block; height: 77px; box-sizing: border-box; }
.period.on { color: #2f7bf0; }
.period.on .period-text { border-bottom: 6px solid #2f7bf0; }
.tri {
  margin: 58px 0 0 6px;
  width: 0;
  height: 0;
  border-left: 18px solid transparent;
  border-bottom: 13px solid #9a9a9a;
}
.setting {
  position: relative;
  margin: 30px 0 0 33px;
}
.setting svg { display: block; }
.setting-dot {
  position: absolute;
  left: 43px;
  top: -6px;
  width: 25px;
  height: 25px;
  border-radius: 50%;
  background: #ef3b3a;
}

.ind-row {
  flex: none;
  display: flex;
  align-items: center;
  padding-left: 18px;
  box-sizing: border-box;
  font-size: 24px;
  white-space: nowrap;
  gap: 10.5px;
}
.kc-row { height: 64px; padding-top: 18px; }
.macd-row { height: 45px; padding-top: 3px; }
.rsi-row { height: 93px; padding-bottom: 0; }
.vol-row { height: 94px; }
.gray { color: #7f7f7f; }
.kc { color: #9ccbe6; }
.orange { color: #e8923a; }
.blue { color: #2ba0cf; }
.pink { color: #d47fd8; }
.salmon { color: #de6f6c; }

.chart { display: block; flex: none; }
.axis {
  font-size: 33.5px;
  fill: #d8d8d8;
}
.axis.dim { font-size: 30px; fill: #838383; }
.rsi-axis {
  font-size: 24px;
  fill: #9a9a9a;
}
.b-mark {
  font-size: 26px;
  font-weight: 700;
  fill: #fff;
  text-anchor: middle;
}
.dates {
  height: 38px;
  flex: none;
  display: flex;
  gap: 307px;
  padding-left: 20px;
  font-size: 33px;
  line-height: 38px;
  color: #838383;
}

.indicators {
  height: 67px;
  flex: none;
  display: flex;
  font-size: 36px;
  line-height: 40px;
  color: #8a8a88;
  border-bottom: 1px solid #222;
  box-sizing: border-box;
  white-space: nowrap;
}
.ind-left {
  width: 536px;
  flex: none;
  overflow: hidden;
  display: flex;
  gap: 33px;
  padding: 18px 0 0 18px;
  box-sizing: border-box;
}
.ind-right {
  display: flex;
  gap: 33px;
  padding: 18px 0 0 26px;
  border-left: 2px solid #222;
  height: 60px;
  box-sizing: border-box;
}
.sel { color: #2f7bf0; }

.index-row {
  height: 96px;
  flex: none;
  margin: 0 14px 0 12px;
  padding-left: 18px;
  display: flex;
  align-items: center;
  border-bottom: 1px solid #222;
  box-sizing: border-box;
}
.index-name {
  font-size: 42px;
  color: #d8d8d4;
  width: 345px;
  flex: none;
}
.index-v {
  font-size: 42px;
  letter-spacing: 0.3px;
  color: #e7423f;
  flex: none;
}
.v1 { width: 232px; }
.v2 { width: 226px; }
.index-arrow { margin-left: 42px; }

.bottom {
  flex: 1;
  position: relative;
  display: flex;
  padding: 23px 0 0 12px;
}
.trade-btn {
  width: 284px;
  height: 114px;
  flex: none;
  border-radius: 57px;
  background: #fb651a;
  color: #fff;
  font-size: 41px;
  display: flex;
  align-items: center;
  justify-content: center;
  padding-left: 16px;
  box-sizing: border-box;
}
.act {
  flex: none;
  width: 120px;
  display: flex;
  flex-direction: column;
  align-items: center;
  font-size: 36px;
  color: #8a8a88;
  height: 124px;
  justify-content: flex-end;
  margin-left: 37px;
}
.act svg { display: block; flex: none; }
.act span { line-height: 42px; margin-top: 18px; }
.act-2 { margin-left: 71px; }
.act-3 { margin-left: 73px; }
.act-4 { margin-left: 71px; }
.more-wrap { position: relative; }
.more-dot {
  position: absolute;
  left: 44px;
  top: -19px;
  width: 20px;
  height: 20px;
  border-radius: 50%;
  background: #ef3b3a;
}
</style>
